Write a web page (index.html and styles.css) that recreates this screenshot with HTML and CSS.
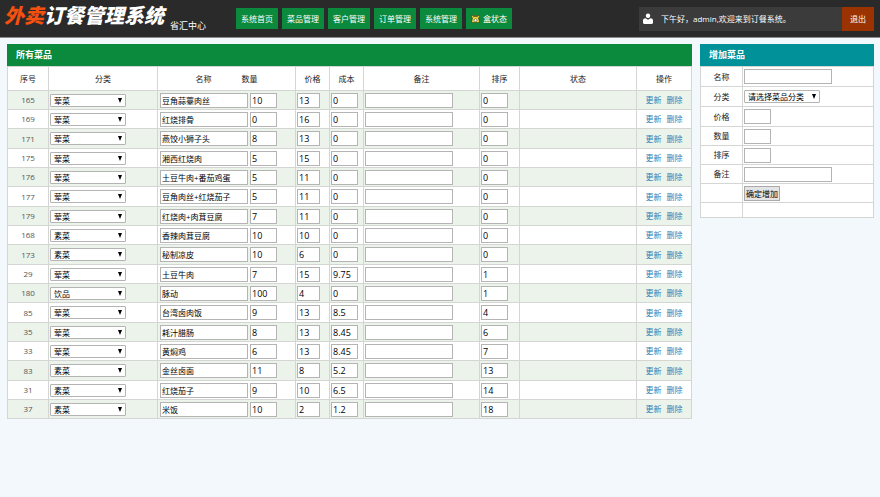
FILE: index.html
```html
<!DOCTYPE html>
<html lang="zh-CN">
<head>
  <meta charset="UTF-8" />
  <meta name="viewport" content="width=device-width, initial-scale=1.0"/>
  <title>外卖订餐管理系统</title>
  <link rel="stylesheet" href="styles.css">
</head>
<body>
  <header class="header">
    <h1 class="logo"><span>外卖</span>订餐管理系统</h1>
    <div class="branch">省汇中心</div>
    <nav class="nav">
      <a href="#">系统首页</a>
      <a href="#">菜品管理</a>
      <a href="#">客户管理</a>
      <a href="#">订单管理</a>
      <a href="#">系统管理</a>
      <a href="#">
        <svg class="phone" viewBox="0 0 18 16" aria-hidden="true">
          <path d="M1 1h16v5h-2l2 9H1l2-9H1z" fill="#f4e13a" stroke="#222" stroke-width="1"/>
          <path d="M3 4.500c2-2 10-2 12 0" fill="none" stroke="#222" stroke-width="1.5"/>
          <circle cx="9" cy="10.500" r="3" fill="#fff" stroke="#222" stroke-width="1"/>
        </svg>
        盒状态
      </a>
    </nav>
    <div class="user">
      <svg class="avatar" viewBox="0 0 20 22" aria-hidden="true">
        <circle cx="10" cy="5.5" r="4.5" fill="#fff"/>
        <path d="M0 20v-5c0-3 2-4.500 5-4.500l5 3 5-3c3 0 5 1.500 5 4.500v5q-1 2-3 2H3q-2 0-3-2z" fill="#fff"/>
      </svg>
      <span class="welcome">下午好，admin,欢迎来到订餐系统。</span>
      <a class="logout" href="#">退出</a>
    </div>
  </header>

  <main class="main">
    <section class="panel dishes">
      <h2>所有菜品</h2>
      <table class="list">
        <colgroup>
          <col class="c-id"><col class="c-type"><col class="c-name"><col class="c-price"><col class="c-price">
          <col class="c-note"><col class="c-sort"><col><col class="c-ops">
        </colgroup>
        <thead>
          <tr>
            <th>序号</th>
            <th>分类</th>
            <th><div class="pair"><span>名称</span><span>数量</span></div></th>
            <th>价格</th>
            <th>成本</th>
            <th>备注</th>
            <th>排序</th>
            <th>状态</th>
            <th>操作</th>
          </tr>
        </thead>
        <tbody id="rows"></tbody>
      </table>
    </section>

    <section class="panel add">
      <h2>增加菜品</h2>
      <form>
        <table class="form">
          <tr><th><label for="name">名称</label></th><td><input class="text" type="text" id="name"></td></tr>
          <tr>
            <th><label for="type">分类</label></th>
            <td>
              <span class="select"><select id="type">
                <option>请选择菜品分类</option>
                <option>荤菜</option>
                <option>素菜</option>
                <option>饮品</option>
              </select></span>
            </td>
          </tr>
          <tr><th><label for="price">价格</label></th><td><input class="num" type="text" id="price"></td></tr>
          <tr><th><label for="count">数量</label></th><td><input class="num" type="text" id="count"></td></tr>
          <tr><th><label for="sort">排序</label></th><td><input class="num" type="text" id="sort"></td></tr>
          <tr><th><label for="note">备注</label></th><td><input class="text" type="text" id="note"></td></tr>
          <tr><th></th><td><button type="button">确定增加</button></td></tr>
          <tr class="last"><th></th><td></td></tr>
        </table>
      </form>
    </section>
  </main>

  <script>
    // id, type, name, count, price, cost, sort
    const dishes = [
      [165, '荤菜', '豆角蒜薹肉丝', 10, 13, 0, 0],
      [169, '荤菜', '红烧排骨', 0, 16, 0, 0],
      [171, '荤菜', '燕饺小狮子头', 8, 13, 0, 0],
      [175, '荤菜', '湘西红烧肉', 5, 15, 0, 0],
      [176, '荤菜', '土豆牛肉+番茄鸡蛋', 5, 11, 0, 0],
      [177, '荤菜', '豆角肉丝+红烧茄子', 5, 11, 0, 0],
      [179, '荤菜', '红烧肉+肉茸豆腐', 7, 11, 0, 0],
      [168, '素菜', '香辣肉茸豆腐', 10, 10, 0, 0],
      [173, '素菜', '秘制凉皮', 10, 6, 0, 0],
      [29, '荤菜', '土豆牛肉', 7, 15, 9.75, 1],
      [180, '饮品', '脉动', 100, 4, 0, 1],
      [85, '荤菜', '台湾卤肉饭', 9, 13, 8.5, 4],
      [35, '荤菜', '耗汁腊肠', 8, 13, 8.45, 6],
      [33, '荤菜', '黄焖鸡', 6, 13, 8.45, 7],
      [83, '素菜', '金丝卤面', 11, 8, 5.2, 13],
      [31, '素菜', '红烧茄子', 9, 10, 6.5, 14],
      [37, '素菜', '米饭', 10, 2, 1.2, 18]
    ];
    const types = ['荤菜', '素菜', '饮品'];

    function field(cls, label, value) {
      return `<input class="${cls}" type="text" aria-label="${label}" value="${value}">`;
    }

    document.getElementById('rows').innerHTML = dishes.map(([id, type, name, count, price, cost, sort]) => `
      <tr>
        <td class="id">${id}</td>
        <td><span class="select"><select aria-label="分类">
          ${types.map(t => `<option${t === type ? ' selected' : ''}>${t}</option>`).join('')}
        </select></span></td>
        <td><div class="fields">${field('text', '名称', name)}${field('num', '数量', count)}</div></td>
        <td>${field('num short', '价格', price)}</td>
        <td>${field('num', '成本', cost)}</td>
        <td>${field('text', '备注', '')}</td>
        <td>${field('num', '排序', sort)}</td>
        <td></td>
        <td class="ops"><a href="#">更新</a><a href="#">删除</a></td>
      </tr>`).join('');
  </script>
</body>
</html>
```

FILE: styles.css
```css
* {
  box-sizing: border-box;
}

body {
  margin: 0;
  font-family: "Open Sans", "Noto Sans CJK SC", sans-serif;
  font-size: 8px;
  line-height: 12px;
  color: #222;
  background-color: #f3f8fd;
}

a {
  text-decoration: none;
}

.header {
  display: flex;
  align-items: center;
  height: 38px;
  padding: 0 6px 0 4px;
  background-color: #2a2a2a;
  border-bottom: 1px solid #8c8c8c;
  color: #fff;
}

.logo {
  margin: 0 6px 5px 0;
  font-size: 20px;
  line-height: 24px;
  font-weight: 900;
  font-style: italic;
  white-space: nowrap;
}

.logo span {
  color: #f4500f;
}

.branch {
  align-self: flex-end;
  width: 66px;
  margin-bottom: 5px;
  font-size: 9px;
}

.nav {
  display: flex;
  gap: 4px;
}

.nav a {
  display: flex;
  align-items: center;
  gap: 3px;
  height: 21px;
  padding: 0 5px;
  background-color: #0b8a3e;
  color: #fff;
  white-space: nowrap;
}

.phone {
  width: 9px;
  height: 8px;
}

.user {
  display: flex;
  align-items: center;
  width: 235px;
  height: 24px;
  margin-left: auto;
  padding-left: 4px;
  background-color: #3b3b3b;
}

.avatar {
  width: 10px;
  height: 11px;
  margin-right: 8px;
}

.welcome {
  flex: 1;
  white-space: nowrap;
}

.logout {
  width: 32px;
  line-height: 24px;
  text-align: center;
  background-color: #9a3300;
  color: #fff;
}

.main {
  display: flex;
  align-items: flex-start;
  gap: 8px;
  padding: 6px 6px 6px 7px;
}

.dishes {
  flex: 1;
}

.add {
  width: 174px;
}

.panel h2 {
  margin: 0;
  padding: 0 9px;
  font-size: 9px;
  line-height: 22px;
  color: #fff;
  background-color: #0b8a3e;
}

.add h2 {
  background-color: #009199;
}

table {
  width: 100%;
  table-layout: fixed;
  border-collapse: collapse;
  background-color: #fff;
}

th, td {
  padding: 0 0 0 1px;
  border: 1px solid #d3d6d3;
  font-weight: normal;
  text-align: left;
}

th {
  padding: 0;
  text-align: center;
}

.list thead tr {
  height: 24px;
}

.list tbody tr {
  height: 19px;
}

.list tbody tr:nth-child(3n) {
  height: 20px;
}

.list tbody tr:nth-child(odd) {
  background-color: #ebf3ea;
}

.c-id { width: 41px; }
.c-type { width: 109px; }
.c-name { width: 138px; }
.c-price { width: 34px; }
.c-note { width: 116px; }
.c-sort { width: 40px; }
.c-ops { width: 55px; }

.pair {
  display: flex;
  justify-content: center;
  gap: 30px;
}

.id, .ops {
  padding: 0;
  text-align: center;
  color: #555;
}

.ops a {
  color: #337fb5;
}

.ops a + a {
  margin-left: 5px;
}

.fields {
  display: flex;
  gap: 2px;
  padding-left: 1px;
}

input, select, button {
  display: block;
  margin: 0;
  font-family: inherit;
  font-size: 8px;
  color: #000;
}

input {
  height: 15px;
  padding: 0 1px;
  border: 1px solid #b4b4b4;
  background-color: #fff;
}

.text {
  width: 88px;
}

.num {
  width: 27px;
  font-size: 9px;
}

.short {
  width: 23px;
}

.select {
  display: block;
  position: relative;
  width: 76px;
}

.select::after {
  content: "";
  position: absolute;
  top: 4px;
  right: 4px;
  border: 2px solid transparent;
  border-top: 5px solid #000;
  border-bottom: 0;
  pointer-events: none;
}

select {
  appearance: none;
  width: 100%;
  height: 13px;
  padding: 0 3px;
  border: 1px solid #b4b4b4;
  border-radius: 1px;
  background-color: #fff;
}

.form th {
  width: 42px;
}

.form tr {
  height: 19px;
}

.form tr:nth-child(-n+3) {
  height: 20px;
}

.form .last {
  height: 15px;
}

button {
  height: 15px;
  padding: 0 1px;
  border: 1px solid #aaa;
  background-color: #e4e4e4;
}
```
